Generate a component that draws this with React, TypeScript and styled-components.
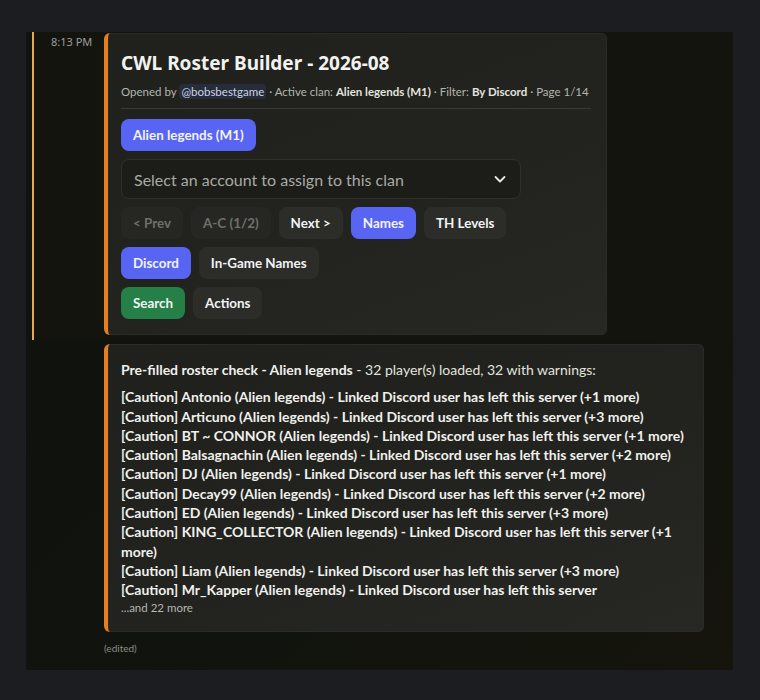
import React from 'react';
import styled, { createGlobalStyle } from 'styled-components';

const GlobalStyle = createGlobalStyle`
  body {
    margin: 0;
    background: #1b1d21;
    font-family: Lato, "Noto Sans", "Liberation Sans", sans-serif;
    color: #dcddd8;
  }
`

const Frame = styled.div`
  width: 707px;
  margin: 32px 0 0 26px;
  background: linear-gradient(135deg, #10120f 0%, #11130e 60%, #15150c 100%);
  padding-bottom: 15px;
`

const Message = styled.div<{ $mention?: boolean }>`
  display: grid;
  grid-template-columns: ${p => (p.$mention ? '70px' : '78px')} auto;
  align-items: start;
  ${p => p.$mention
    ? `
    margin-left: 6px;
    border-left: 2px solid #e8a84e;
    background: #13140e;
    padding: 1px 0 5px;
  `
    : `
    padding: 4px 0 0;
  `}
`

const Stamp = styled.div`
  padding: 1px 0 0 17px;
  font-family: "Noto Sans", sans-serif;
  font-size: 11px;
  line-height: 16px;
  color: #9c9d98;
`

const Body = styled.div`
  display: flex;
  flex-direction: column;
`

const Embed = styled.div<{ $width: number; $top: number }>`
  width: ${p => p.$width}px;
  box-sizing: border-box;
  border-left: 4px solid #e67f22;
  border-radius: 6px;
  background: linear-gradient(160deg, #20211d 0%, #22231f 55%, #272824 100%);
  box-shadow: inset 0 0 0 1px #2a2b27;
  padding: ${p => p.$top}px 16px 16px 13px;
`

const Title = styled.div`
  font-family: "Noto Sans", sans-serif;
  font-size: 19px;
  font-weight: 700;
  line-height: 24px;
  color: #f2f3ef;
`

const Sub = styled.div`
  margin-top: 9px;
  font-size: 11.5px;
  line-height: 16px;
  color: #b3b5ae;
  padding-bottom: 8px;
  border-bottom: 1px solid #393a35;
  white-space: nowrap;
  b {
    color: #e3e4df;
    font-weight: 700;
  }
`

const Mention = styled.span`
  background: #262c3a;
  color: #cdd2e4;
  border-radius: 3px;
  padding: 1px 2px;
`

const Rows = styled.div`
  display: flex;
  flex-direction: column;
  gap: 8px;
  margin-top: 10px;
`

const Row = styled.div`
  display: flex;
  gap: 8px;
`

const Button = styled.div<{ $kind: 'primary' | 'secondary' | 'success' | 'disabled' }>`
  height: 32px;
  padding: 0 12px;
  display: flex;
  align-items: center;
  border-radius: 8px;
  font-size: 13.4px;
  font-weight: 700;
  background: ${p => ({ primary: '#5865f2', secondary: '#2c2d29', success: '#248046', disabled: '#262723' })[p.$kind]};
  color: ${p => (p.$kind === 'disabled' ? '#6f706b' : '#f2f3f5')};
`

const Select = styled.div`
  width: 400px;
  height: 40px;
  box-sizing: border-box;
  display: flex;
  align-items: center;
  justify-content: space-between;
  padding: 0 12px 0 12px;
  background: #1c1d19;
  border: 1px solid #2f302b;
  border-radius: 8px;
  font-size: 16px;
  color: #a9aaa4;
`

const Report = styled.div`
  font-size: 14px;
  line-height: 19.3px;
  color: #e2e3de;
  b {
    font-weight: 700;
    color: #f0f0ec;
  }
`

const Lines = styled.div`
  margin-top: 8px;
  font-weight: 700;
  color: #f0f0ec;
`

const More = styled.div`
  font-size: 11.5px;
  line-height: 16px;
  color: #b3b5ae;
`

const Edited = styled.div`
  margin-top: 9px;
  font-size: 10px;
  line-height: 14px;
  color: #8c8d88;
`

const lines = [
  '[Caution] Antonio (Alien legends) - Linked Discord user has left this server (+1 more)',
  '[Caution] Articuno (Alien legends) - Linked Discord user has left this server (+3 more)',
  '[Caution] BT ~ CONNOR (Alien legends) - Linked Discord user has left this server (+1 more)',
  '[Caution] Balsagnachin (Alien legends) - Linked Discord user has left this server (+2 more)',
  '[Caution] DJ (Alien legends) - Linked Discord user has left this server (+1 more)',
  '[Caution] Decay99 (Alien legends) - Linked Discord user has left this server (+2 more)',
  '[Caution] ED (Alien legends) - Linked Discord user has left this server (+3 more)',
  '[Caution] KING_COLLECTOR (Alien legends) - Linked Discord user has left this server (+1 more)',
  '[Caution] Liam (Alien legends) - Linked Discord user has left this server (+3 more)',
  '[Caution] Mr_Kapper (Alien legends) - Linked Discord user has left this server',
]

const Chevron = () => (
  <svg width="16" height="16" viewBox="0 0 16 16" fill="none">
    <path d="M3.5 6l4.5 4.5L12.5 6" stroke="#e8e9e4" strokeWidth="1.8" strokeLinecap="round" strokeLinejoin="round" />
  </svg>
)

const App: React.FC = () => {
  return (
    <>
      <GlobalStyle />
      <Frame>
        <Message $mention>
          <Stamp>8:13 PM</Stamp>
          <Embed $width={503} $top={18}>
            <Title>CWL Roster Builder - 2026-08</Title>
            <Sub>
              Opened by <Mention>@bobsbestgame</Mention> · Active clan: <b>Alien legends (M1)</b> · Filter: <b>By Discord</b> · Page 1/14
            </Sub>
            <Rows>
              <Row>
                <Button $kind="primary">Alien legends (M1)</Button>
              </Row>
              <Select>
                <span>Select an account to assign to this clan</span>
                <Chevron />
              </Select>
              <Row>
                <Button $kind="disabled">&lt; Prev</Button>
                <Button $kind="disabled">A-C (1/2)</Button>
                <Button $kind="secondary">Next &gt;</Button>
                <Button $kind="primary">Names</Button>
                <Button $kind="secondary">TH Levels</Button>
              </Row>
              <Row>
                <Button $kind="primary">Discord</Button>
                <Button $kind="secondary">In-Game Names</Button>
              </Row>
              <Row>
                <Button $kind="success">Search</Button>
                <Button $kind="secondary">Actions</Button>
              </Row>
            </Rows>
          </Embed>
        </Message>
        <Message>
          <div />
          <Body>
            <Embed $width={600} $top={16}>
              <Report>
                <b>Pre-filled roster check - Alien legends</b> - 32 player(s) loaded, 32 with warnings:
                <Lines>
                  {lines.map((l, i) => <div key={i}>{l}</div>)}
                </Lines>
              </Report>
              <More>...and 22 more</More>
            </Embed>
            <Edited>(edited)</Edited>
          </Body>
        </Message>
      </Frame>
    </>
  )
}

export default App
